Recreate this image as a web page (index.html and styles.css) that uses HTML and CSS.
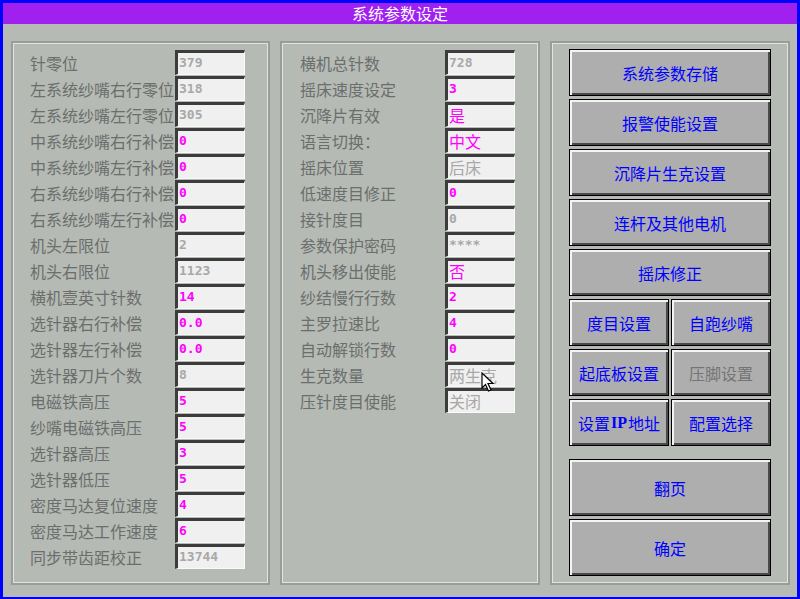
FILE: index.html
```html
<!DOCTYPE html>
<html lang="zh">
<head>
<meta charset="utf-8">
<title>系统参数设定</title>
<link rel="stylesheet" href="styles.css">
</head>
<body>
<div class="screen">
  <div class="title">系统参数设定</div>
  <div class="main">
    <div class="panel panel-left">
      <div class="grid">
        <span class="lbl">针零位</span><span class="val off">379</span>
        <span class="lbl">左系统纱嘴右行零位</span><span class="val off">318</span>
        <span class="lbl">左系统纱嘴左行零位</span><span class="val off">305</span>
        <span class="lbl">中系统纱嘴右行补偿</span><span class="val on">0</span>
        <span class="lbl">中系统纱嘴左行补偿</span><span class="val on">0</span>
        <span class="lbl">右系统纱嘴右行补偿</span><span class="val on">0</span>
        <span class="lbl">右系统纱嘴左行补偿</span><span class="val on">0</span>
        <span class="lbl">机头左限位</span><span class="val off">2</span>
        <span class="lbl">机头右限位</span><span class="val off">1123</span>
        <span class="lbl">横机壹英寸针数</span><span class="val on">14</span>
        <span class="lbl">选针器右行补偿</span><span class="val on">0.0</span>
        <span class="lbl">选针器左行补偿</span><span class="val on">0.0</span>
        <span class="lbl">选针器刀片个数</span><span class="val off">8</span>
        <span class="lbl">电磁铁高压</span><span class="val on">5</span>
        <span class="lbl">纱嘴电磁铁高压</span><span class="val on">5</span>
        <span class="lbl">选针器高压</span><span class="val on">3</span>
        <span class="lbl">选针器低压</span><span class="val on">5</span>
        <span class="lbl">密度马达复位速度</span><span class="val on">4</span>
        <span class="lbl">密度马达工作速度</span><span class="val on">6</span>
        <span class="lbl">同步带齿距校正</span><span class="val off">13744</span>
      </div>
    </div>
    <div class="panel panel-mid">
      <div class="grid">
        <span class="lbl">横机总针数</span><span class="val off">728</span>
        <span class="lbl">摇床速度设定</span><span class="val on">3</span>
        <span class="lbl">沉降片有效</span><span class="val on cjk">是</span>
        <span class="lbl">语言切换：</span><span class="val on cjk">中文</span>
        <span class="lbl">摇床位置</span><span class="val off cjk">后床</span>
        <span class="lbl">低速度目修正</span><span class="val on">0</span>
        <span class="lbl">接针度目</span><span class="val off">0</span>
        <span class="lbl">参数保护密码</span><span class="val off">****</span>
        <span class="lbl">机头移出使能</span><span class="val on cjk">否</span>
        <span class="lbl">纱结慢行行数</span><span class="val on">2</span>
        <span class="lbl">主罗拉速比</span><span class="val on">4</span>
        <span class="lbl">自动解锁行数</span><span class="val on">0</span>
        <span class="lbl">生克数量</span><span class="val off cjk">两生克</span>
        <span class="lbl">压针度目使能</span><span class="val off cjk">关闭</span>
      </div>
    </div>
    <div class="panel panel-right">
      <div class="btns">
        <div class="btn wide">系统参数存储</div>
        <div class="btn wide">报警使能设置</div>
        <div class="btn wide">沉降片生克设置</div>
        <div class="btn wide">连杆及其他电机</div>
        <div class="btn wide">摇床修正</div>
        <div class="btn">度目设置</div>
        <div class="btn">自跑纱嘴</div>
        <div class="btn">起底板设置</div>
        <div class="btn disabled">压脚设置</div>
        <div class="btn">设置<b class="ip">IP</b>地址</div>
        <div class="btn">配置选择</div>
      </div>
      <div class="btns-bottom">
        <div class="btn tall">翻页</div>
        <div class="btn tall">确定</div>
      </div>
    </div>
  </div>
  <svg class="cursor" width="14" height="20" viewBox="0 0 14 20">
    <path d="M1 1 L1 16 L4.5 12.5 L7.5 19 L10 18 L7 11.5 L12 11.5 Z" fill="#fff" stroke="#000" stroke-width="1.2" stroke-linejoin="miter"/>
  </svg>
</div>
</body>
</html>
```
FILE: styles.css
```css
* { box-sizing: border-box; }
html, body { margin: 0; padding: 0; }
body {
  width: 800px;
  height: 599px;
  overflow: hidden;
  font-family: "Noto Sans CJK SC", "Noto Sans", sans-serif;
}
.screen {
  position: relative;
  width: 800px;
  height: 599px;
  background: #b5bab5;
  border: solid #0000ff;
  border-width: 3px 3px 2px 3px;
}
.title {
  height: 21px;
  background: #a020f0;
  color: #ffffff;
  text-align: center;
  font-size: 16px;
  line-height: 21px;
}
.main {
  display: flex;
  gap: 10px;
  padding: 17px 0 0 8px;
}
.panel {
  height: 544px;
  border: 2px solid #999c99;
  box-shadow: inset 0 0 0 1px #e2e4e2;
}
.panel-left { width: 259px; padding: 7px 0 0 17px; }
.panel-mid { width: 260px; padding: 7px 0 0 18px; }
.panel-right { width: 240px; padding: 6px 0 0 17px; }
.grid {
  display: grid;
  grid-template-columns: 145px 70px;
  grid-auto-rows: 25px;
  row-gap: 1px;
}
.lbl {
  color: #6c6e6c;
  font-size: 16px;
  line-height: 25px;
  white-space: nowrap;
  padding-top: 1px;
}
.val {
  background: #f0f0f0;
  border-top: 3px solid #3c3c3c;
  border-left: 3px solid #3c3c3c;
  border-right: 1px solid #fafafa;
  border-bottom: 1px solid #fafafa;
  padding-left: 1px;
  font-family: "DejaVu Sans Mono", monospace;
  font-weight: bold;
  font-size: 13px;
  line-height: 20px;
  white-space: nowrap;
  overflow: hidden;
}
.val.on { color: #ff00ff; }
.val.off { color: #a8a8a8; }
.val.cjk {
  font-family: "Noto Sans CJK SC", sans-serif;
  font-weight: normal;
  font-size: 16px;
  line-height: 20px;
}
.btns {
  display: grid;
  grid-template-columns: 100px 100px;
  grid-auto-rows: 47px;
  column-gap: 2px;
  row-gap: 3px;
  width: 202px;
}
.btns-bottom {
  display: flex;
  flex-direction: column;
  gap: 3px;
  width: 202px;
  margin-top: 13px;
}
.btn {
  display: flex;
  align-items: center;
  justify-content: center;
  background: #aeaeae;
  border: 1px solid #000;
  box-shadow: inset 2px 2px 0 #f4f4f4, inset -2px -2px 0 #4a4a4a;
  color: #0000ff;
  font-size: 16px;
  white-space: nowrap;
}
.btn.wide { grid-column: 1 / 3; }
.btn.tall { height: 57px; }
.btn.disabled { color: #747474; }
.ip {
  font-family: "Liberation Serif", serif;
  font-weight: bold;
  font-size: 16px;
  margin: 0 1px;
}
.cursor {
  position: absolute;
  left: 478px;
  top: 369px;
}
```
